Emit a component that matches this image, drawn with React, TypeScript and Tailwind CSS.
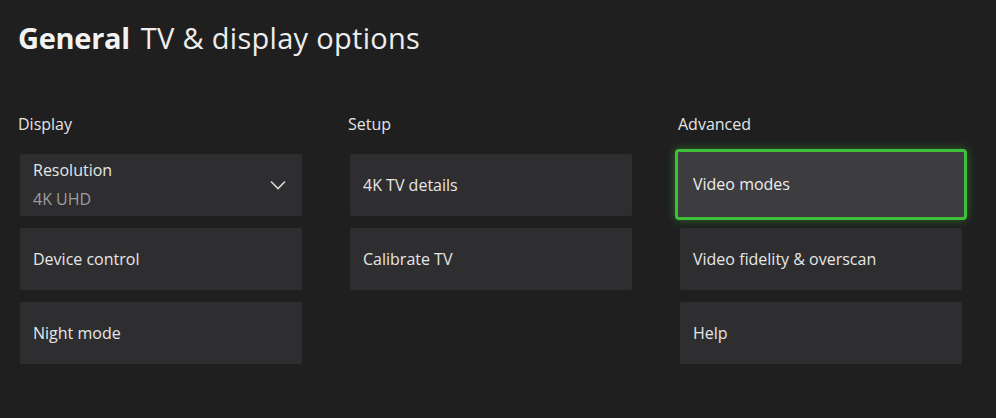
import React from 'react';

type Item = { label: string; sub?: string; dropdown?: boolean; focused?: boolean };

const columns: { title: string; items: Item[] }[] = [
  {
    title: 'Display',
    items: [
      { label: 'Resolution', sub: '4K UHD', dropdown: true },
      { label: 'Device control' },
      { label: 'Night mode' },
    ],
  },
  {
    title: 'Setup',
    items: [{ label: '4K TV details' }, { label: 'Calibrate TV' }],
  },
  {
    title: 'Advanced',
    items: [
      { label: 'Video modes', focused: true },
      { label: 'Video fidelity & overscan' },
      { label: 'Help' },
    ],
  },
];

const Tile: React.FC<{ item: Item }> = ({ item }) => {
  if (item.focused) {
    return (
      <div className="relative h-[62px]">
        <div className="absolute -inset-x-[5px] -top-[5px] -bottom-[4px] flex items-center rounded-[4px] border-[3px] border-[#3fbf3a] bg-[#3d3c3f] pl-[15px] shadow-[0_0_10px_rgba(63,191,58,0.45)]">
          <span className="text-[16px] text-[#ececec]">{item.label}</span>
        </div>
      </div>
    );
  }
  return (
    <div className="flex h-[62px] items-center justify-between rounded-[2px] bg-[#2e2e30] pl-[13px] pr-[16px]">
      {item.sub ? (
        <div className="flex flex-col leading-[29px]">
          <span className="text-[16px] text-[#e6e6e6]">{item.label}</span>
          <span className="text-[16px] text-[#9d9d9f]">{item.sub}</span>
        </div>
      ) : (
        <span className="text-[16px] text-[#e6e6e6]">{item.label}</span>
      )}
      {item.dropdown && (
        <svg width="16" height="10" viewBox="0 0 16 10" fill="none">
          <path d="M1 1.5 L8 8.5 L15 1.5" stroke="#d8d8d8" strokeWidth="1.6" />
        </svg>
      )}
    </div>
  );
};

export default function App() {
  return (
    <div
      className="h-[418px] w-[996px] overflow-hidden bg-[#1f1f1f] text-white"
      style={{ fontFamily: '"Open Sans", "Noto Sans", sans-serif' }}
    >
      <div className="flex items-baseline gap-[11px] pl-[18px] pt-[16px]">
        <span className="text-[29px] font-bold tracking-[-0.3px] text-[#f2f2f2]">General</span>
        <span className="text-[29px] tracking-[0.3px] text-[#ededed]">TV &amp; display options</span>
      </div>
      <div className="mt-[52px] flex gap-[48px] pl-[20px]">
        {columns.map((col) => (
          <div key={col.title} className="w-[282px]">
            <div className="-ml-[2px] mb-[18px] text-[16px] text-[#e4e4e4]">{col.title}</div>
            <div className="flex flex-col gap-[12px]">
              {col.items.map((it) => (
                <Tile key={it.label} item={it} />
              ))}
            </div>
          </div>
        ))}
      </div>
    </div>
  );
}
